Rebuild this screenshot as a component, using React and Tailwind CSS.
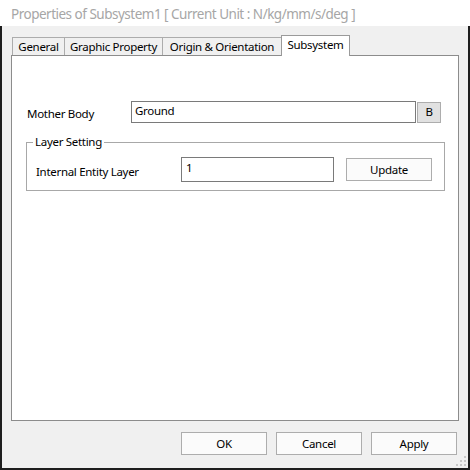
import React from "react";

const font = { fontFamily: '"Noto Sans", "Open Sans", Arial, sans-serif' };

function Tab({ label, w, selected }) {
  if (selected) {
    return (
      <div
        className={`${w} h-[21px] -mb-[1px] relative z-10 bg-white border-t border-l border-r border-[#9a9a9a] flex items-start justify-center pt-[1px] text-[11.5px] tracking-[-0.3px] leading-[16px] text-black`}
      >
        {label}
      </div>
    );
  }
  return (
    <div
      className={`${w} h-[18px] bg-[#f0f0f0] border-t border-l border-r border-[#acacac] flex items-center justify-center text-[11.5px] tracking-[-0.3px] leading-[16px] text-black`}
    >
      {label}
    </div>
  );
}

function Btn({ children, className = "" }) {
  return (
    <div
      className={`h-[23px] bg-[#fbfbfb] border border-[#adadad] flex items-center justify-center text-[11.5px] tracking-[-0.3px] leading-[16px] text-black ${className}`}
    >
      {children}
    </div>
  );
}

export default function App() {
  return (
    <div className="w-[470px] h-[470px] flex flex-col bg-white" style={font}>
      <div className="h-[26px] pl-[11px] pt-[4px] text-[13.5px] tracking-[-0.5px] leading-[20px] text-[#a6a6a6] whitespace-nowrap">
        Properties of Subsystem1 [ Current Unit : N/kg/mm/s/deg ]
      </div>
      <div className="flex-1 flex flex-col bg-[#f0f0f0] border-l-2 border-r-2 border-b-2 border-[#1e1e1e] px-[9px]">
        <div className="h-[29px] flex items-end pl-[1px]">
          <Tab label="General" w="w-[53px]" />
          <Tab label="Graphic Property" w="w-[99px] -ml-[1px]" />
          <Tab label="Origin & Orientation" w="w-[120px] -ml-[1px]" />
          <Tab label="Subsystem" w="w-[69px] -ml-[1px]" selected />
        </div>
        <div className="h-[366px] bg-white border border-[#8c8c8c] flex flex-col pt-[45px] pl-[15px] pr-[13px] text-[11.5px] tracking-[-0.3px] leading-[16px] text-black">
          <div className="flex items-center h-[22px]">
            <div className="w-[104px] pt-[3px]">Mother Body</div>
            <div className="w-[285px] h-[22px] border border-[#7a7a7a] bg-white pl-[3px] pt-[1px]">
              Ground
            </div>
            <div className="ml-[1px] w-[24px] h-[21px] bg-[#e1e1e1] border border-[#adadad] flex items-center justify-center">
              B
            </div>
          </div>
          <fieldset className="mt-[11px] -ml-[1px] border border-[#a8a8a8] pl-[9px] pr-[11px] pt-[7px] pb-[8px] h-[57px]">
            <legend className="-ml-[3px] px-[2px]">Layer Setting</legend>
            <div className="flex items-center">
              <div className="w-[145px] pt-[5px]">Internal Entity Layer</div>
              <div className="w-[153px] h-[25px] border border-[#7a7a7a] bg-white pl-[4px] pt-[2px]">
                1
              </div>
              <Btn className="ml-[12px] w-[86px]">Update</Btn>
            </div>
          </fieldset>
        </div>
        <div className="flex justify-end gap-[9px] pr-[2px] mt-[11px]">
          <Btn className="w-[86px]">OK</Btn>
          <Btn className="w-[86px]">Cancel</Btn>
          <Btn className="w-[86px]">Apply</Btn>
        </div>
        <div className="flex-1 flex items-end justify-end pb-[2px] -mr-[7px]">
          <svg width="10" height="10" viewBox="0 0 10 10">
            <g fill="#c8c8c8">
              <rect x="8" y="0" width="2" height="2" />
              <rect x="4" y="4" width="2" height="2" />
              <rect x="8" y="4" width="2" height="2" />
              <rect x="0" y="8" width="2" height="2" />
              <rect x="4" y="8" width="2" height="2" />
              <rect x="8" y="8" width="2" height="2" />
            </g>
          </svg>
        </div>
      </div>
    </div>
  );
}
